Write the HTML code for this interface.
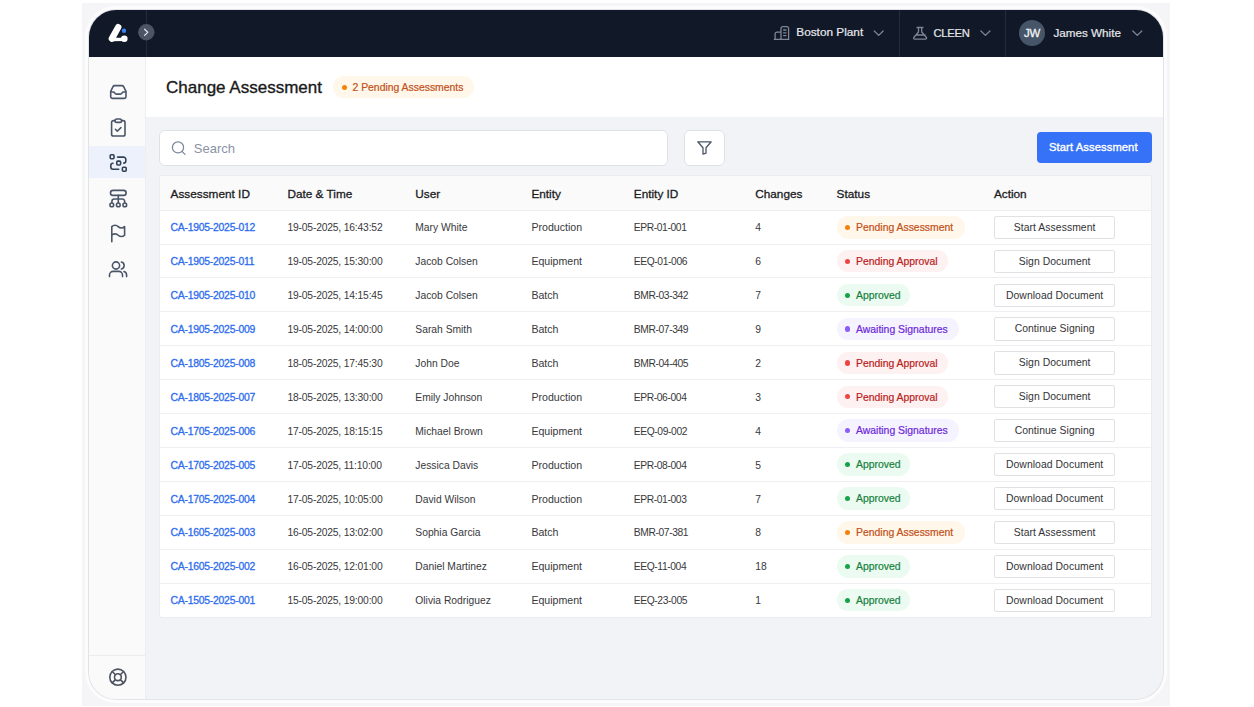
<!DOCTYPE html>
<html><head><meta charset="utf-8">
<style>
*{box-sizing:border-box;margin:0;padding:0}
html,body{width:1254px;height:707px;overflow:hidden;background:#fff;font-family:"Liberation Sans",sans-serif}
.a{position:absolute}
#outer{left:82px;top:3px;width:1088px;height:703px;background:#f5f5f8}
#bezel{left:85px;top:6px;width:1082px;height:697px;border-radius:31px;background:#fcfcfd}
#app{left:89px;top:10px;width:1074px;height:689px;border-radius:27px;overflow:hidden;background:#f2f3f7;box-shadow:0 0 0 1px #e2e3e8}
#pg{left:-89px;top:-10px;width:1254px;height:707px}
.t{position:absolute;white-space:nowrap;line-height:1}
svg{position:absolute;overflow:visible}
#tbl{left:160px;top:176px;width:991px;height:440.7px;background:#fff;border-radius:2px;box-shadow:0 0 0 1px #ebecf0;overflow:hidden}
.th{position:absolute;white-space:nowrap;line-height:1;font-size:11.8px;color:#1c1c1f;-webkit-text-stroke:0.3px #1c1c1f}
.td{position:absolute;white-space:nowrap;line-height:1;font-size:10.3px;color:#38383b}
.lk{position:absolute;white-space:nowrap;line-height:1;font-size:10.4px;color:#2d6cee;-webkit-text-stroke:0.3px #2d6cee;letter-spacing:-0.25px}
.rl{position:absolute;left:0;width:991px;height:1px;background:#efeff2}
.pill{position:absolute;height:22.6px;border-radius:12px;font-size:10.4px;line-height:23.6px;padding-left:19.5px;white-space:nowrap}
.pill i{position:absolute;left:8.6px;top:8.8px;width:5.2px;height:5.2px;border-radius:50%}
.btn{position:absolute;width:121.5px;height:23.3px;border:1px solid #e0e1e5;border-radius:2px;background:#fff;font-size:10.4px;line-height:21.3px;text-align:center;color:#333336;white-space:nowrap;letter-spacing:0.05px}
</style></head><body>
<div id="outer" class="a"></div>
<div id="bezel" class="a"></div>
<div id="app" class="a"><div id="pg" class="a">
  <!-- header -->
  <div class="a" style="left:89px;top:10px;width:1074px;height:47px;background:#111827"></div>
  <div class="a" style="left:145.5px;top:10px;width:1px;height:47px;background:#222c3b"></div>
  <div class="a" style="left:899px;top:10px;width:1px;height:47px;background:#222c3b"></div>
  <div class="a" style="left:1005px;top:10px;width:1px;height:47px;background:#222c3b"></div>
  <!-- logo -->
  <svg style="left:0;top:0" width="1" height="1">
    <path d="M118.2 27.2 L111.9 38.6" fill="none" stroke="#fff" stroke-width="6.4" stroke-linecap="round"/>
    <path d="M112.5 39.5 L124 39.3" fill="none" stroke="#fff" stroke-width="3.3" stroke-linecap="round"/>
    <circle cx="124.3" cy="38.7" r="3.3" fill="#fff"/>
    <circle cx="124" cy="30.8" r="2.2" fill="#3b82f6"/>
    <circle cx="146.3" cy="32.3" r="8.2" fill="#4b5565"/>
    <path d="M144.6 29.2 L147.8 32.3 L144.6 35.4" fill="none" stroke="#e5e7eb" stroke-width="1.2" stroke-linecap="round" stroke-linejoin="round"/>
  </svg>
  <!-- header right -->
  <svg style="left:0;top:0" width="1" height="1" fill="none" stroke="#7d8596" stroke-width="1.3" stroke-linecap="round" stroke-linejoin="round">
    <path d="M774.3 39.3 h14.6 M775.1 39.3 v-5.2 a2 2 0 0 1 2 -2 h3.6 M781 39.3 V28.6 a2 2 0 0 1 2 -2 h3.6 a2 2 0 0 1 2 2 V39.3 M783.6 30 h2.4 M783.6 32.8 h2.4 M783.6 35.6 h2.4"/>
    <path d="M874.3 31 L878.7 35.4 L883.1 31"/>
    <path d="M917 27.5 h6 M918.5 27.5 v4.5 l-4.7 5.5 a1 1 0 0 0 0.8 1.6 h11 a1 1 0 0 0 0.8 -1.6 l-4.7 -5.5 v-4.5 M915.8 35 h9.4"/>
    <path d="M980.9 31 L985.4 35.4 L989.9 31"/>
    <path d="M1132.8 31 L1137.3 35.4 L1141.8 31"/>
  </svg>
  <div class="t" style="left:796.3px;top:26.8px;font-size:11.8px;color:#e6e8ec;-webkit-text-stroke:0.2px #e6e8ec">Boston Plant</div>
  <div class="t" style="left:933.5px;top:27.6px;font-size:11.2px;color:#e6e8ec;letter-spacing:-0.25px;-webkit-text-stroke:0.2px #e6e8ec">CLEEN</div>
  <div class="a" style="left:1019px;top:20px;width:26px;height:26px;border-radius:50%;background:#475569"></div>
  <div class="t" style="left:1024px;top:27.6px;font-size:11.4px;color:#f3f4f6;letter-spacing:-0.3px;-webkit-text-stroke:0.3px #f3f4f6">JW</div>
  <div class="t" style="left:1053.4px;top:26.8px;font-size:11.7px;color:#e6e8ec;-webkit-text-stroke:0.2px #e6e8ec">James White</div>

  <!-- sidebar -->
  <div class="a" style="left:89px;top:57px;width:57px;height:642px;background:#fafafb;border-right:1px solid #edeef2"></div>
  <div class="a" style="left:89px;top:146.4px;width:56px;height:32px;background:#edf1fb"></div>
  <div class="a" style="left:89px;top:655px;width:56px;height:1px;background:#ebecf0"></div>
  <svg style="left:0;top:0" width="1" height="1" fill="none" stroke="#4a5568" stroke-width="1.6" stroke-linecap="round" stroke-linejoin="round">
    <!-- inbox -->
    <path d="M110.7 91.3 L113 86.6 a1.8 1.8 0 0 1 1.6 -1 h7.4 a1.8 1.8 0 0 1 1.6 1 L126 91.3 V96.6 a1.8 1.8 0 0 1 -1.8 1.8 h-11.7 a1.8 1.8 0 0 1 -1.8 -1.8 Z M110.8 92 h2.6 a1.5 1.5 0 0 1 1.2 .7 l.5 .7 a1.5 1.5 0 0 0 1.2 .7 h4.2 a1.5 1.5 0 0 0 1.2 -.7 l.5 -.7 a1.5 1.5 0 0 1 1.2 -.7 h2.6"/>
    <!-- clipboard -->
    <path d="M115 120.6 h-1.6 a1.8 1.8 0 0 0 -1.8 1.8 v11.8 a1.8 1.8 0 0 0 1.8 1.8 h9.8 a1.8 1.8 0 0 0 1.8 -1.8 v-11.8 a1.8 1.8 0 0 0 -1.8 -1.8 h-1.6"/>
    <rect x="115" y="119" width="6.6" height="3.4" rx="1.7"/>
    <path d="M115.4 129.3 l1.9 1.9 l3.6 -3.6"/>
    <!-- active: transform -->
    <g stroke="#334155">
    <rect x="110.2" y="154.8" width="3.8" height="3.9" rx="0.9"/>
    <rect x="116.8" y="161.1" width="3.8" height="3.9" rx="0.9"/>
    <rect x="122.4" y="167.3" width="3.8" height="3.9" rx="0.9"/>
    <path d="M117.6 157.1 h6 a2.2 2.2 0 0 1 2.2 2.2 v1.6 a2.2 2.2 0 0 1 -2 2.2"/>
    <path d="M113 163.3 a2.2 2.2 0 0 0 -2.2 2.2 v1.6 a2.2 2.2 0 0 0 2.2 2.2 h5.7"/>
    </g>
    <!-- hierarchy -->
    <rect x="110.5" y="190.4" width="15.6" height="5" rx="2.5"/>
    <path d="M118.3 195.4 v7.4 M111.9 202.8 v-1.4 a2.4 2.4 0 0 1 2.4 -2.4 h8 a2.4 2.4 0 0 1 2.4 2.4 v1.4"/>
    <circle cx="111.8" cy="204.9" r="1.85"/><circle cx="118.3" cy="204.9" r="1.85"/><circle cx="124.8" cy="204.9" r="1.85"/>
    <!-- flag -->
    <path d="M111.8 241.8 v-6 M111.8 226.6 a4.5 4.5 0 0 1 6.4 0 a4.5 4.5 0 0 0 6.4 0 v8.6 a4.5 4.5 0 0 1 -6.4 0 a4.5 4.5 0 0 0 -6.4 0 Z"/>
    <!-- users -->
    <circle cx="116" cy="265.5" r="3.6"/>
    <path d="M109.5 276.6 v-1.6 a3.6 3.6 0 0 1 3.6 -3.6 h5.8 a3.6 3.6 0 0 1 3.6 3.6 v1.6 M121.4 262 a3.6 3.6 0 0 1 0 7 M126.6 276.6 v-1.6 a3.6 3.6 0 0 0 -2.6 -3.4"/>
  </svg>
  <svg style="left:0;top:0" width="1" height="1" fill="none" stroke="#4b5260" stroke-width="1.6" stroke-linecap="round">
    <circle cx="117.9" cy="677.2" r="8.1"/><circle cx="117.9" cy="677.2" r="3.4"/>
    <path d="M112.2 671.5 l3.3 3.3 M123.6 671.5 l-3.3 3.3 M112.2 682.9 l3.3 -3.3 M123.6 682.9 l-3.3 -3.3"/>
  </svg>

  <!-- title bar -->
  <div class="a" style="left:146px;top:57px;width:1017px;height:60px;background:#fff"></div>
  <div class="t" style="left:166px;top:78.7px;font-size:17px;color:#1a1a1a;-webkit-text-stroke:0.35px #1a1a1a">Change Assessment</div>
  <div class="a" style="left:333px;top:76px;width:141px;height:22px;border-radius:11px;background:#fff7e9"></div>
  <div class="a" style="left:341.7px;top:84.5px;width:5px;height:5px;border-radius:50%;background:#f5840c"></div>
  <div class="t" style="left:352.5px;top:82.6px;font-size:10.4px;color:#c2501a;-webkit-text-stroke:0.2px #c2501a">2 Pending Assessments</div>

  <!-- toolbar -->
  <div class="a" style="left:159px;top:130px;width:509px;height:35.5px;border:1px solid #dfe1e7;border-radius:6px;background:#fff"></div>
  <svg style="left:0;top:0" width="1" height="1" fill="none" stroke="#7a869b" stroke-width="1.25" stroke-linecap="round">
    <circle cx="178" cy="147.4" r="5.6"/><path d="M182 151.4 L185 154.4"/>
  </svg>
  <div class="t" style="left:193.8px;top:141.8px;font-size:13px;color:#8a93a6">Search</div>
  <div class="a" style="left:684px;top:130px;width:40.5px;height:35.5px;border:1px solid #dfe1e7;border-radius:6px;background:#fff"></div>
  <svg style="left:0;top:0" width="1" height="1" fill="none" stroke="#4a5568" stroke-width="1.3" stroke-linejoin="round">
    <path d="M697.8 141.8 h13.4 l-5.2 6 v5.4 l-3 1 v-6.4 Z" stroke-linecap="round"/>
  </svg>
  <div class="a" style="left:1037px;top:132.3px;width:114.7px;height:31.2px;border-radius:4px;background:#3672f7"></div>
  <div class="t" style="left:1049px;top:142.4px;font-size:11.2px;color:#fff;letter-spacing:0.1px;-webkit-text-stroke:0.35px #fff">Start Assessment</div>

  <!-- table -->
  <div id="tbl" class="a">
    <div class="a" style="left:0;top:0;width:991px;height:34px;background:#fafafa"></div><div class="rl" style="top:33.9px"></div>
<div class="th" style="left:10.6px;top:12.5px">Assessment ID</div>
<div class="th" style="left:127.4px;top:12.5px">Date &amp; Time</div>
<div class="th" style="left:255.3px;top:12.5px">User</div>
<div class="th" style="left:371.4px;top:12.5px">Entity</div>
<div class="th" style="left:473.8px;top:12.5px">Entity ID</div>
<div class="th" style="left:595.2px;top:12.5px">Changes</div>
<div class="th" style="left:676.6px;top:12.5px">Status</div>
<div class="th" style="left:833.9px;top:12.5px">Action</div>
<div class="lk" style="left:10.6px;top:47.3px">CA-1905-2025-012</div>
<div class="td" style="left:127.4px;top:47.3px;letter-spacing:-0.17px">19-05-2025, 16:43:52</div>
<div class="td" style="left:255.3px;top:47.3px;">Mary White</div>
<div class="td" style="left:371.4px;top:47.3px;font-size:10.6px;margin-top:-1.0px">Production</div>
<div class="td" style="left:473.8px;top:47.3px;letter-spacing:-0.4px">EPR-01-001</div>
<div class="td" style="left:595.2px;top:47.3px;">4</div>
<div class="pill" style="left:676.6px;top:40.0px;width:128px;background:#fff7e9;color:#c2501a;-webkit-text-stroke:0.2px #c2501a"><i style="background:#f77f0a"></i>Pending Assessment</div>
<div class="btn" style="left:833.9px;top:39.8px">Start Assessment</div>
<div class="rl" style="top:67.6px"></div>
<div class="lk" style="left:10.6px;top:81.2px">CA-1905-2025-011</div>
<div class="td" style="left:127.4px;top:81.2px;letter-spacing:-0.17px">19-05-2025, 15:30:00</div>
<div class="td" style="left:255.3px;top:81.2px;">Jacob Colsen</div>
<div class="td" style="left:371.4px;top:81.2px;font-size:10.6px;margin-top:-1.0px">Equipment</div>
<div class="td" style="left:473.8px;top:81.2px;letter-spacing:-0.4px">EEQ-01-006</div>
<div class="td" style="left:595.2px;top:81.2px;">6</div>
<div class="pill" style="left:676.6px;top:73.9px;width:111px;background:#fef1f1;color:#b91c1c;-webkit-text-stroke:0.2px #b91c1c"><i style="background:#ef4444"></i>Pending Approval</div>
<div class="btn" style="left:833.9px;top:73.7px">Sign Document</div>
<div class="rl" style="top:101.4px"></div>
<div class="lk" style="left:10.6px;top:115.1px">CA-1905-2025-010</div>
<div class="td" style="left:127.4px;top:115.1px;letter-spacing:-0.17px">19-05-2025, 14:15:45</div>
<div class="td" style="left:255.3px;top:115.1px;">Jacob Colsen</div>
<div class="td" style="left:371.4px;top:115.1px;font-size:10.6px;margin-top:-1.0px">Batch</div>
<div class="td" style="left:473.8px;top:115.1px;letter-spacing:-0.4px">BMR-03-342</div>
<div class="td" style="left:595.2px;top:115.1px;">7</div>
<div class="pill" style="left:676.6px;top:107.8px;width:73.5px;background:#ecfbf1;color:#15803d;-webkit-text-stroke:0.2px #15803d"><i style="background:#16a34a"></i>Approved</div>
<div class="btn" style="left:833.9px;top:107.6px">Download Document</div>
<div class="rl" style="top:135.4px"></div>
<div class="lk" style="left:10.6px;top:149.0px">CA-1905-2025-009</div>
<div class="td" style="left:127.4px;top:149.0px;letter-spacing:-0.17px">19-05-2025, 14:00:00</div>
<div class="td" style="left:255.3px;top:149.0px;">Sarah Smith</div>
<div class="td" style="left:371.4px;top:149.0px;font-size:10.6px;margin-top:-1.0px">Batch</div>
<div class="td" style="left:473.8px;top:149.0px;letter-spacing:-0.4px">BMR-07-349</div>
<div class="td" style="left:595.2px;top:149.0px;">9</div>
<div class="pill" style="left:676.6px;top:141.6px;width:122.3px;background:#f5f3ff;color:#6d28d9;-webkit-text-stroke:0.2px #6d28d9"><i style="background:#8b5cf6"></i>Awaiting Signatures</div>
<div class="btn" style="left:833.9px;top:141.4px">Continue Signing</div>
<div class="rl" style="top:169.2px"></div>
<div class="lk" style="left:10.6px;top:182.9px">CA-1805-2025-008</div>
<div class="td" style="left:127.4px;top:182.9px;letter-spacing:-0.17px">18-05-2025, 17:45:30</div>
<div class="td" style="left:255.3px;top:182.9px;">John Doe</div>
<div class="td" style="left:371.4px;top:182.9px;font-size:10.6px;margin-top:-1.0px">Batch</div>
<div class="td" style="left:473.8px;top:182.9px;letter-spacing:-0.4px">BMR-04-405</div>
<div class="td" style="left:595.2px;top:182.9px;">2</div>
<div class="pill" style="left:676.6px;top:175.6px;width:111px;background:#fef1f1;color:#b91c1c;-webkit-text-stroke:0.2px #b91c1c"><i style="background:#ef4444"></i>Pending Approval</div>
<div class="btn" style="left:833.9px;top:175.4px">Sign Document</div>
<div class="rl" style="top:203.1px"></div>
<div class="lk" style="left:10.6px;top:216.8px">CA-1805-2025-007</div>
<div class="td" style="left:127.4px;top:216.8px;letter-spacing:-0.17px">18-05-2025, 13:30:00</div>
<div class="td" style="left:255.3px;top:216.8px;">Emily Johnson</div>
<div class="td" style="left:371.4px;top:216.8px;font-size:10.6px;margin-top:-1.0px">Production</div>
<div class="td" style="left:473.8px;top:216.8px;letter-spacing:-0.4px">EPR-06-004</div>
<div class="td" style="left:595.2px;top:216.8px;">3</div>
<div class="pill" style="left:676.6px;top:209.5px;width:111px;background:#fef1f1;color:#b91c1c;-webkit-text-stroke:0.2px #b91c1c"><i style="background:#ef4444"></i>Pending Approval</div>
<div class="btn" style="left:833.9px;top:209.2px">Sign Document</div>
<div class="rl" style="top:237.0px"></div>
<div class="lk" style="left:10.6px;top:250.7px">CA-1705-2025-006</div>
<div class="td" style="left:127.4px;top:250.7px;letter-spacing:-0.17px">17-05-2025, 18:15:15</div>
<div class="td" style="left:255.3px;top:250.7px;">Michael Brown</div>
<div class="td" style="left:371.4px;top:250.7px;font-size:10.6px;margin-top:-1.0px">Equipment</div>
<div class="td" style="left:473.8px;top:250.7px;letter-spacing:-0.4px">EEQ-09-002</div>
<div class="td" style="left:595.2px;top:250.7px;">4</div>
<div class="pill" style="left:676.6px;top:243.4px;width:122.3px;background:#f5f3ff;color:#6d28d9;-webkit-text-stroke:0.2px #6d28d9"><i style="background:#8b5cf6"></i>Awaiting Signatures</div>
<div class="btn" style="left:833.9px;top:243.1px">Continue Signing</div>
<div class="rl" style="top:270.9px"></div>
<div class="lk" style="left:10.6px;top:284.6px">CA-1705-2025-005</div>
<div class="td" style="left:127.4px;top:284.6px;letter-spacing:-0.17px">17-05-2025, 11:10:00</div>
<div class="td" style="left:255.3px;top:284.6px;">Jessica Davis</div>
<div class="td" style="left:371.4px;top:284.6px;font-size:10.6px;margin-top:-1.0px">Production</div>
<div class="td" style="left:473.8px;top:284.6px;letter-spacing:-0.4px">EPR-08-004</div>
<div class="td" style="left:595.2px;top:284.6px;">5</div>
<div class="pill" style="left:676.6px;top:277.2px;width:73.5px;background:#ecfbf1;color:#15803d;-webkit-text-stroke:0.2px #15803d"><i style="background:#16a34a"></i>Approved</div>
<div class="btn" style="left:833.9px;top:277.0px">Download Document</div>
<div class="rl" style="top:304.9px"></div>
<div class="lk" style="left:10.6px;top:318.5px">CA-1705-2025-004</div>
<div class="td" style="left:127.4px;top:318.5px;letter-spacing:-0.17px">17-05-2025, 10:05:00</div>
<div class="td" style="left:255.3px;top:318.5px;">David Wilson</div>
<div class="td" style="left:371.4px;top:318.5px;font-size:10.6px;margin-top:-1.0px">Production</div>
<div class="td" style="left:473.8px;top:318.5px;letter-spacing:-0.4px">EPR-01-003</div>
<div class="td" style="left:595.2px;top:318.5px;">7</div>
<div class="pill" style="left:676.6px;top:311.1px;width:73.5px;background:#ecfbf1;color:#15803d;-webkit-text-stroke:0.2px #15803d"><i style="background:#16a34a"></i>Approved</div>
<div class="btn" style="left:833.9px;top:310.9px">Download Document</div>
<div class="rl" style="top:338.8px"></div>
<div class="lk" style="left:10.6px;top:352.4px">CA-1605-2025-003</div>
<div class="td" style="left:127.4px;top:352.4px;letter-spacing:-0.17px">16-05-2025, 13:02:00</div>
<div class="td" style="left:255.3px;top:352.4px;">Sophia Garcia</div>
<div class="td" style="left:371.4px;top:352.4px;font-size:10.6px;margin-top:-1.0px">Batch</div>
<div class="td" style="left:473.8px;top:352.4px;letter-spacing:-0.4px">BMR-07-381</div>
<div class="td" style="left:595.2px;top:352.4px;">8</div>
<div class="pill" style="left:676.6px;top:345.0px;width:128px;background:#fff7e9;color:#c2501a;-webkit-text-stroke:0.2px #c2501a"><i style="background:#f77f0a"></i>Pending Assessment</div>
<div class="btn" style="left:833.9px;top:344.8px">Start Assessment</div>
<div class="rl" style="top:372.6px"></div>
<div class="lk" style="left:10.6px;top:386.3px">CA-1605-2025-002</div>
<div class="td" style="left:127.4px;top:386.3px;letter-spacing:-0.17px">16-05-2025, 12:01:00</div>
<div class="td" style="left:255.3px;top:386.3px;">Daniel Martinez</div>
<div class="td" style="left:371.4px;top:386.3px;font-size:10.6px;margin-top:-1.0px">Equipment</div>
<div class="td" style="left:473.8px;top:386.3px;letter-spacing:-0.4px">EEQ-11-004</div>
<div class="td" style="left:595.2px;top:386.3px;">18</div>
<div class="pill" style="left:676.6px;top:379.0px;width:73.5px;background:#ecfbf1;color:#15803d;-webkit-text-stroke:0.2px #15803d"><i style="background:#16a34a"></i>Approved</div>
<div class="btn" style="left:833.9px;top:378.8px">Download Document</div>
<div class="rl" style="top:406.5px"></div>
<div class="lk" style="left:10.6px;top:420.2px">CA-1505-2025-001</div>
<div class="td" style="left:127.4px;top:420.2px;letter-spacing:-0.17px">15-05-2025, 19:00:00</div>
<div class="td" style="left:255.3px;top:420.2px;">Olivia Rodriguez</div>
<div class="td" style="left:371.4px;top:420.2px;font-size:10.6px;margin-top:-1.0px">Equipment</div>
<div class="td" style="left:473.8px;top:420.2px;letter-spacing:-0.4px">EEQ-23-005</div>
<div class="td" style="left:595.2px;top:420.2px;">1</div>
<div class="pill" style="left:676.6px;top:412.9px;width:73.5px;background:#ecfbf1;color:#15803d;-webkit-text-stroke:0.2px #15803d"><i style="background:#16a34a"></i>Approved</div>
<div class="btn" style="left:833.9px;top:412.6px">Download Document</div>
  </div>
</div></div>
</body></html>
